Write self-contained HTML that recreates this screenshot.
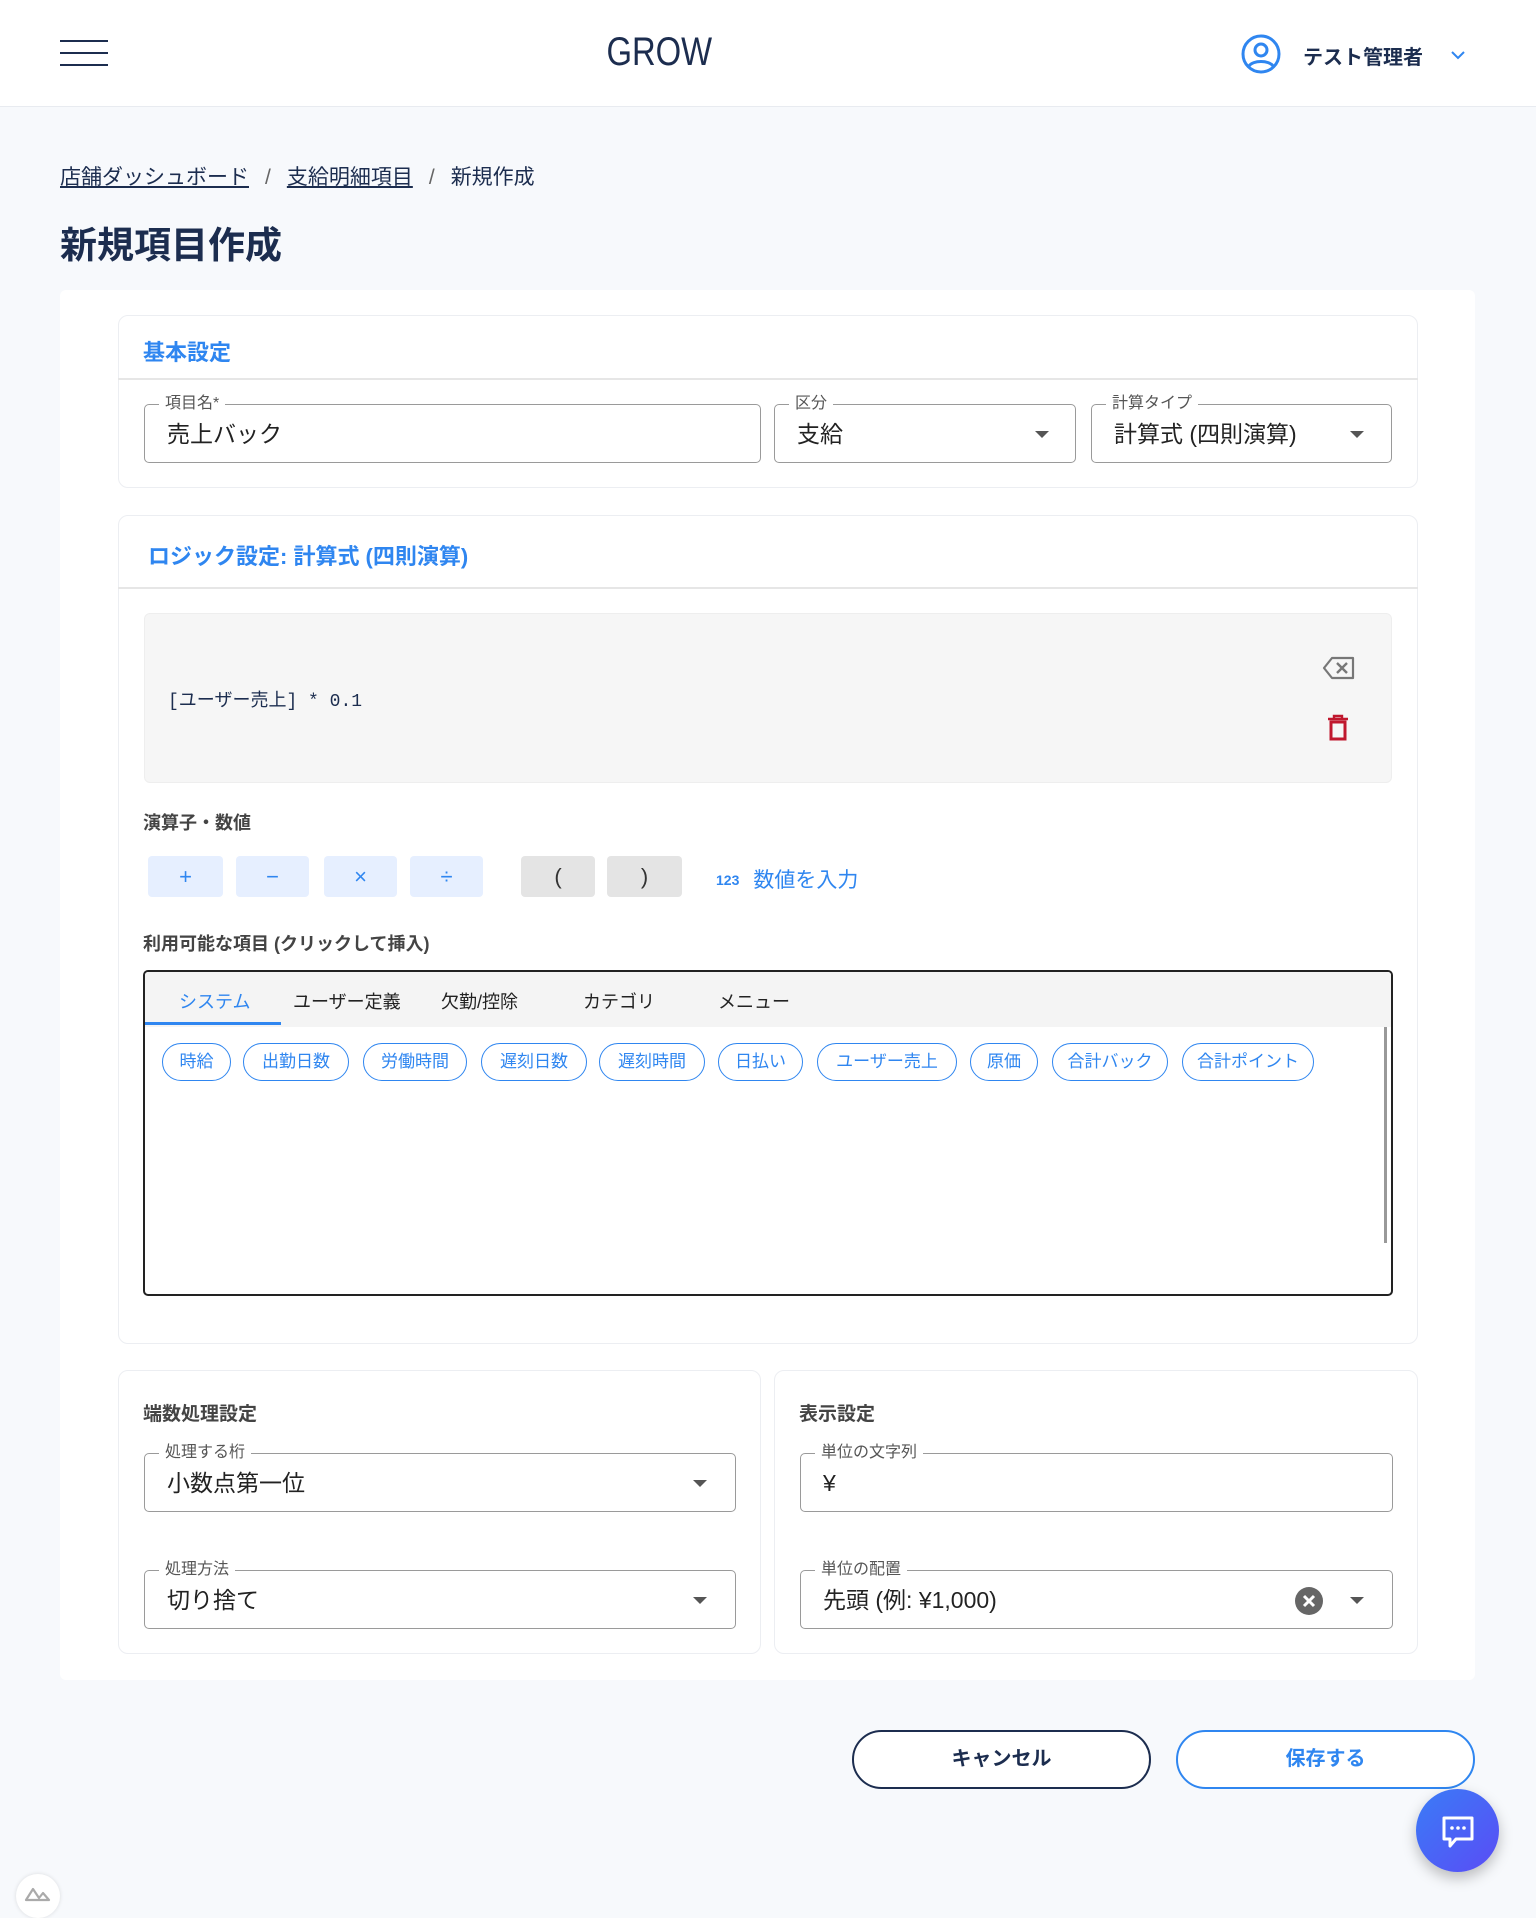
<!DOCTYPE html>
<html><head><meta charset="utf-8"><style>
*{box-sizing:border-box;margin:0;padding:0}
body{width:1536px;height:1909px;background:#f7f9fc;font-family:"Liberation Sans","Noto Sans CJK JP",sans-serif;position:relative;overflow:hidden;color:#222}
.a{position:absolute}
.hdr{left:0;top:0;width:1536px;height:107px;background:#fff;border-bottom:1px solid #e8ebf0}
.card{background:#fff;border:1px solid #eceef2;border-radius:10px}
.fld{border:1px solid #9a9a9a;border-radius:5px;background:#fff}
.lbl{position:absolute;top:-11px;left:14px;background:#fff;padding:0 6px;font-size:16px;color:#555;line-height:20px}
.val{position:absolute;left:22px;top:14px;font-size:23px;color:#222;line-height:30px}
.tri{position:absolute;width:0;height:0;border-left:7px solid transparent;border-right:7px solid transparent;border-top:7px solid #555}
.op{border-radius:4px;font-size:22px;text-align:center;line-height:41px}
.chip{border:1.5px solid #2f86f0;border-radius:20px;color:#2f86f0;font-size:17px;text-align:center;line-height:35px;top:1043px;height:38px}
.tab{top:988px;font-size:18px;color:#222}
.h3{font-size:19px;font-weight:bold;color:#444}
</style></head><body>
<div class="a hdr"></div>
<div class="a" style="left:60px;top:40px;width:48px;height:2px;background:#1c2d4f"></div>
<div class="a" style="left:60px;top:52px;width:48px;height:2px;background:#1c2d4f"></div>
<div class="a" style="left:60px;top:64px;width:48px;height:2px;background:#1c2d4f"></div>
<div class="a" style="left:596px;top:28px;width:116px;text-align:center;font-family:'Liberation Sans Narrow','Liberation Sans',sans-serif;font-weight:300;font-size:40px;color:#1c2d4f;line-height:48px;transform:scaleX(.82)">GROW</div>
<svg class="a" style="left:1240px;top:33px" width="42" height="42" viewBox="0 0 42 42"><circle cx="21" cy="21" r="18" fill="none" stroke="#2f86f0" stroke-width="3"/><circle cx="21" cy="17" r="6" fill="none" stroke="#2f86f0" stroke-width="3"/><path d="M9 33c4-6 20-6 24 0" fill="none" stroke="#2f86f0" stroke-width="3"/></svg>
<div class="a" style="left:1303px;top:41px;font-size:20px;font-weight:bold;color:#1c2d4f">テスト管理者</div>
<svg class="a" style="left:1450px;top:49px" width="16" height="12"><path d="M2 3l6 6 6-6" fill="none" stroke="#2f86f0" stroke-width="2"/></svg>

<div class="a" style="left:60px;top:161px;font-size:21px;color:#1c2d4f"><u>店舗ダッシュボード</u><span style="margin:0 16px;color:#666">/</span><u>支給明細項目</u><span style="margin:0 16px;color:#666">/</span>新規作成</div>
<div class="a" style="left:60px;top:215px;font-size:37px;font-weight:bold;color:#1c2d4f">新規項目作成</div>

<div class="a" style="left:60px;top:290px;width:1415px;height:1390px;background:#fff;border-radius:6px"></div>

<div class="a card" style="left:118px;top:315px;width:1300px;height:173px"></div>
<div class="a" style="left:118px;top:378px;width:1300px;height:2px;background:#e6e6e6"></div>
<div class="a" style="left:143px;top:335px;font-size:22px;font-weight:bold;color:#2f86f0">基本設定</div>
<div class="a fld" style="left:144px;top:404px;width:617px;height:59px"><span class="lbl">項目名*</span><span class="val">売上バック</span></div>
<div class="a fld" style="left:774px;top:404px;width:302px;height:59px"><span class="lbl">区分</span><span class="val">支給</span><span class="tri" style="left:260px;top:26px"></span></div>
<div class="a fld" style="left:1091px;top:404px;width:301px;height:59px"><span class="lbl">計算タイプ</span><span class="val">計算式 (四則演算)</span><span class="tri" style="left:258px;top:26px"></span></div>

<div class="a card" style="left:118px;top:515px;width:1300px;height:829px"></div>
<div class="a" style="left:118px;top:587px;width:1300px;height:2px;background:#e6e6e6"></div>
<div class="a" style="left:148px;top:539px;font-size:22px;font-weight:bold;color:#2f86f0">ロジック設定: 計算式 (四則演算)</div>
<div class="a" style="left:144px;top:613px;width:1248px;height:170px;background:#f6f6f6;border:1px solid #eee;border-radius:6px"></div>
<div class="a" style="left:168px;top:686px;font-family:'Liberation Mono','Noto Sans CJK JP',monospace;font-size:18px;color:#1c2d4f">[ユーザー売上] * 0.1</div>
<svg class="a" style="left:1322px;top:655px" width="34" height="26" viewBox="0 0 34 26"><path d="M10 3h21v20H10L2 13z" fill="none" stroke="#777" stroke-width="2.2" stroke-linejoin="round"/><path d="M15 8l10 10M25 8L15 18" stroke="#777" stroke-width="2.4"/></svg>
<svg class="a" style="left:1326px;top:714px" width="24" height="28" viewBox="0 0 24 28"><path d="M2 5h20M8 5V2h8v3" stroke="#c0182e" stroke-width="2.4" fill="none"/><rect x="5" y="8" width="14" height="17" fill="none" stroke="#c0182e" stroke-width="3"/></svg>

<div class="a h3" style="left:143px;top:809px;font-size:18px">演算子・数値</div>
<div class="a op" style="left:148px;top:856px;width:75px;height:41px;background:#e6efff;color:#2f86f0">+</div>
<div class="a op" style="left:236px;top:856px;width:73px;height:41px;background:#e6efff;color:#2f86f0">−</div>
<div class="a op" style="left:324px;top:856px;width:73px;height:41px;background:#e6efff;color:#2f86f0">×</div>
<div class="a op" style="left:410px;top:856px;width:73px;height:41px;background:#e6efff;color:#2f86f0">÷</div>
<div class="a op" style="left:521px;top:856px;width:74px;height:41px;background:#e4e4e4;color:#333">(</div>
<div class="a op" style="left:607px;top:856px;width:75px;height:41px;background:#e4e4e4;color:#333">)</div>
<div class="a" style="left:716px;top:864px;font-size:21px;color:#2f86f0"><b style="font-size:14px;margin-right:14px;vertical-align:2px">123</b>数値を入力</div>

<div class="a h3" style="left:143px;top:930px;font-size:18px">利用可能な項目 (クリックして挿入)</div>
<div class="a" style="left:143px;top:970px;width:1250px;height:326px;border:2px solid #222;border-radius:5px;background:#fff;overflow:hidden">
 <div style="height:55px;background:#f4f4f4"></div>
 <div style="position:absolute;left:0;top:50px;width:136px;height:3px;background:#2f86f0"></div>
 <div style="position:absolute;right:4px;top:55px;width:3px;height:216px;background:#999"></div>
</div>
<div class="a tab" style="left:179px;color:#2f86f0">システム</div>
<div class="a tab" style="left:293px">ユーザー定義</div>
<div class="a tab" style="left:441px">欠勤/控除</div>
<div class="a tab" style="left:583px">カテゴリ</div>
<div class="a tab" style="left:718px">メニュー</div>
<div class="a chip" style="left:162px;width:69px">時給</div>
<div class="a chip" style="left:243px;width:106px">出勤日数</div>
<div class="a chip" style="left:363px;width:104px">労働時間</div>
<div class="a chip" style="left:481px;width:106px">遅刻日数</div>
<div class="a chip" style="left:599px;width:106px">遅刻時間</div>
<div class="a chip" style="left:718px;width:85px">日払い</div>
<div class="a chip" style="left:817px;width:140px">ユーザー売上</div>
<div class="a chip" style="left:970px;width:68px">原価</div>
<div class="a chip" style="left:1052px;width:116px">合計バック</div>
<div class="a chip" style="left:1182px;width:132px">合計ポイント</div>

<div class="a card" style="left:118px;top:1370px;width:643px;height:284px"></div>
<div class="a card" style="left:774px;top:1370px;width:644px;height:284px"></div>
<div class="a h3" style="left:143px;top:1399px">端数処理設定</div>
<div class="a h3" style="left:799px;top:1399px">表示設定</div>
<div class="a fld" style="left:144px;top:1453px;width:592px;height:59px"><span class="lbl">処理する桁</span><span class="val">小数点第一位</span><span class="tri" style="left:548px;top:26px"></span></div>
<div class="a fld" style="left:144px;top:1570px;width:592px;height:59px"><span class="lbl">処理方法</span><span class="val">切り捨て</span><span class="tri" style="left:548px;top:26px"></span></div>
<div class="a fld" style="left:800px;top:1453px;width:593px;height:59px"><span class="lbl">単位の文字列</span><span class="val">¥</span></div>
<div class="a fld" style="left:800px;top:1570px;width:593px;height:59px"><span class="lbl">単位の配置</span><span class="val">先頭 (例: ¥1,000)</span>
 <svg style="position:absolute;left:494px;top:16px" width="28" height="28"><circle cx="14" cy="14" r="14" fill="#666"/><path d="M9 9l10 10M19 9L9 19" stroke="#fff" stroke-width="3"/></svg>
 <span class="tri" style="left:549px;top:26px"></span></div>

<div class="a" style="left:852px;top:1730px;width:299px;height:59px;border:2px solid #1c2d4f;border-radius:30px;background:#fff;text-align:center;line-height:55px;font-size:20px;font-weight:bold;color:#1c2d4f">キャンセル</div>
<div class="a" style="left:1176px;top:1730px;width:299px;height:59px;border:2px solid #2f86f0;border-radius:30px;background:#fff;text-align:center;line-height:55px;font-size:20px;font-weight:bold;color:#2f86f0">保存する</div>

<div class="a" style="left:1416px;top:1789px;width:83px;height:83px;border-radius:50%;background:linear-gradient(135deg,#3a7cf7,#5a4cf5);box-shadow:0 6px 14px rgba(0,0,0,.25)"></div>
<svg class="a" style="left:1440px;top:1814px" width="36" height="36" viewBox="0 0 36 36"><path d="M4 4h28v21H16l-6 7v-7H4z" fill="none" stroke="#fff" stroke-width="3" stroke-linejoin="round"/><circle cx="12" cy="14" r="1.8" fill="#fff"/><circle cx="18" cy="14" r="1.8" fill="#fff"/><circle cx="24" cy="14" r="1.8" fill="#fff"/></svg>

<div class="a" style="left:16px;top:1874px;width:44px;height:44px;border-radius:50%;background:#fff;box-shadow:0 0 4px rgba(0,0,0,.12)"></div>
<svg class="a" style="left:24px;top:1886px" width="28" height="16"><path d="M2 14l7-11 6 9 4-5 6 7z" fill="none" stroke="#aaa" stroke-width="2.2" stroke-linejoin="round"/></svg>
</body></html>
